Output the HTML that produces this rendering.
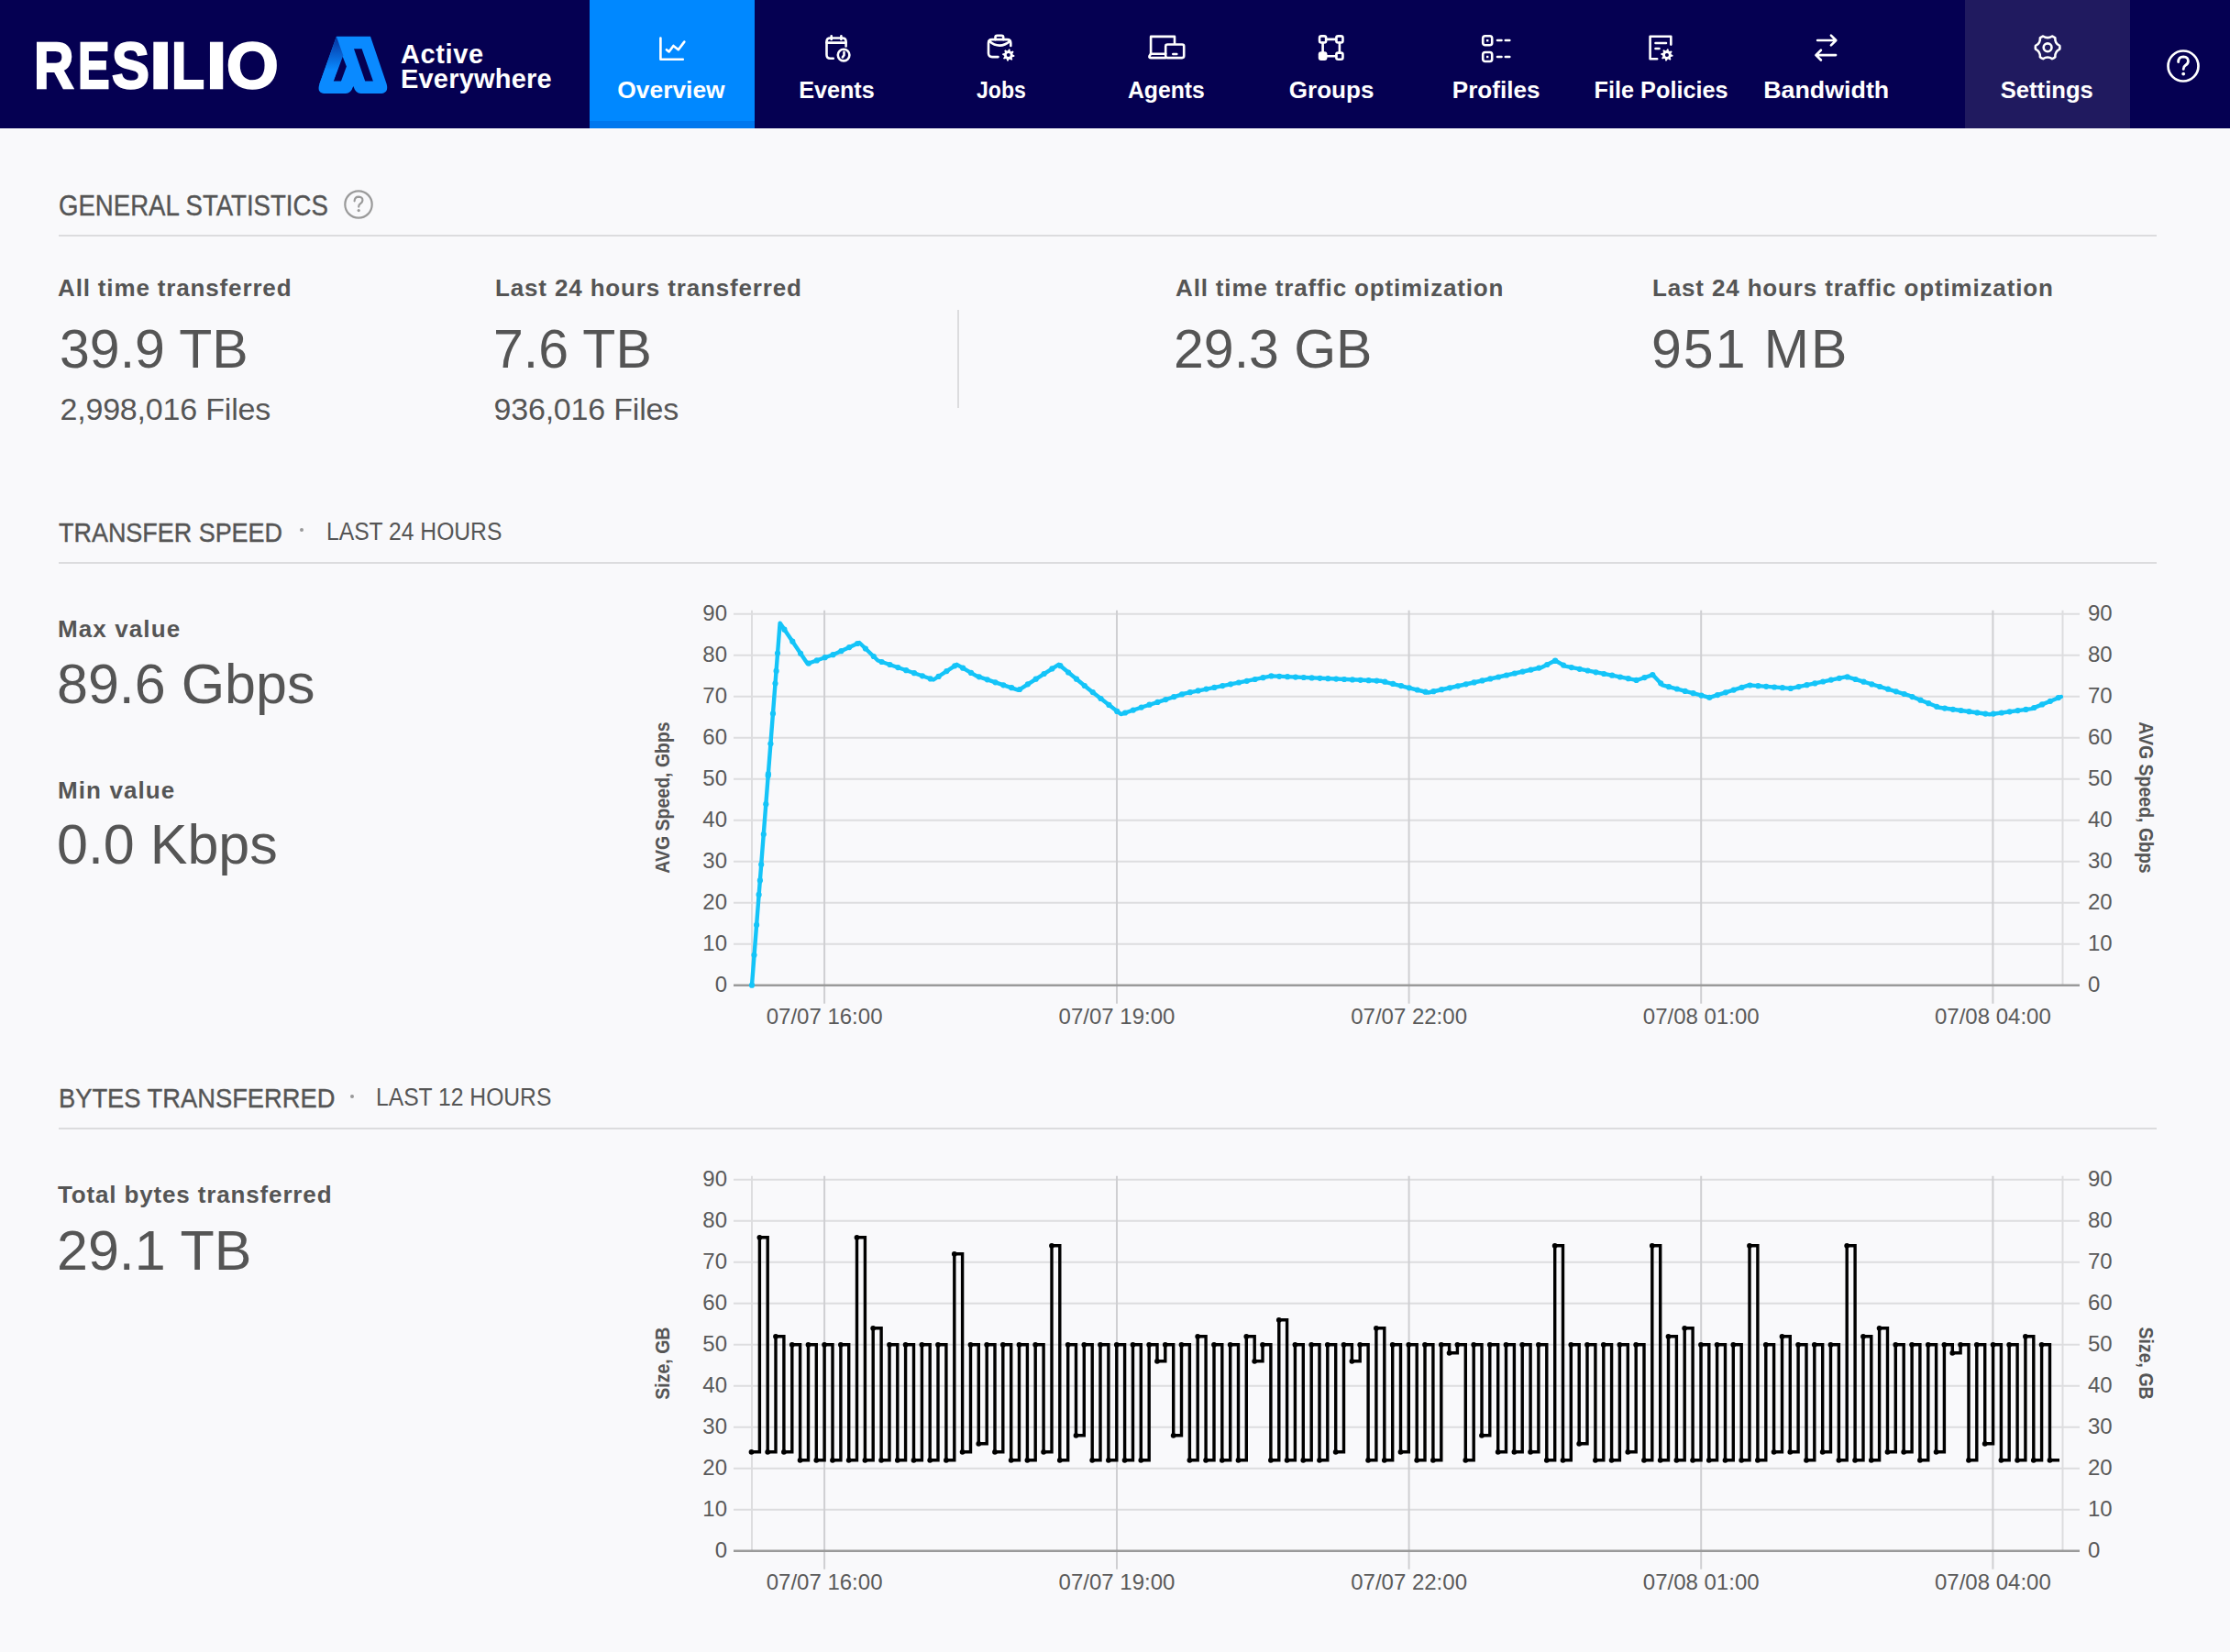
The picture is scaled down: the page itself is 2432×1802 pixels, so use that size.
<!DOCTYPE html><html><head><meta charset="utf-8"><title>Resilio Overview</title><style>

html,body{margin:0;padding:0;}
body{width:2432px;height:1802px;overflow:hidden;position:relative;background:#f9f9fb;font-family:"Liberation Sans",sans-serif;}
.t{position:absolute;white-space:nowrap;line-height:1;}
.res{top:37px;font-size:70px;font-weight:bold;color:#fff;-webkit-text-stroke:2.4px #fff;}
.navl{position:absolute;top:84.5px;font-size:26.5px;line-height:1;color:#fff;text-align:center;white-space:nowrap;font-weight:bold;}
svg text{font-family:"Liberation Sans",sans-serif;}
.ax{font-size:24px;fill:#5a5a5a;}
.at{font-size:22px;font-weight:bold;fill:#555;}

</style></head><body>
<div id="hdr" style="position:absolute;left:0;top:0;width:2432px;height:140px;background:#050052">
<div class="t res" style="left:37.4px;transform:scaleX(0.86);transform-origin:0 0">R</div>
<div class="t res" style="left:85.1px;transform:scaleX(0.74);transform-origin:0 0">E</div>
<div class="t res" style="left:121.9px;transform:scaleX(0.875);transform-origin:0 0">S</div>
<div class="t res" style="left:163.4px;transform:scaleX(1.25);transform-origin:0 0">I</div>
<div class="t res" style="left:186.9px;transform:scaleX(0.84);transform-origin:0 0">L</div>
<div class="t res" style="left:224.5px;transform:scaleX(1.14);transform-origin:0 0">I</div>
<div class="t res" style="left:246.5px;transform:scaleX(1.04);transform-origin:0 0">O</div>
<svg style="position:absolute;left:340px;top:30px" width="90" height="80" viewBox="340 30 90 80"><defs><linearGradient id="lg" x1="0" y1="0" x2="0" y2="1"><stop offset="0" stop-color="#06309a"/><stop offset="0.7" stop-color="#0a8aff"/></linearGradient></defs><path fill-rule="evenodd" fill="#0a8aff" d="M366.9,39.8 H404 L421.6,91.5 Q424.5,102.1 414,102.1 H393.5 Q388,102.1 385.3,94 Q382.6,102.1 377,102.1 H355.5 Q345,102.1 348.3,92 Z M386,53.2 H394.6 L406.9,88.5 H398.2 Z M373.2,60.6 L377.9,72.4 L372,88.5 H363.7 Z"/><path fill="url(#lg)" d="M366.9,39.8 L374.3,60.6 L363.7,88.5 L348.3,92 Z"/></svg>
<div id="act" class="t" style="left:437px;top:44.5px;font-size:29px;font-weight:bold;color:#fff;letter-spacing:0.6px">Active</div>
<div id="every" class="t" style="left:437px;top:71.5px;font-size:29px;font-weight:bold;color:#fff;letter-spacing:0.2px">Everywhere</div>
<div style="position:absolute;left:643px;top:0;width:180px;height:140px;background:#0088ff">
<div style="position:absolute;left:0;top:132px;width:180px;height:8px;background:#0077ee"></div>
<svg style="position:absolute;left:70px;top:32px;overflow:visible" width="40" height="40" viewBox="0 0 40 40"><path fill="none" stroke="#fff" stroke-width="2.6" stroke-linecap="round" stroke-linejoin="round" stroke-linecap="square" stroke-linejoin="miter" d="M7.4,9.5 V32.7 H31.8"/><path fill="none" stroke="#fff" stroke-width="2.6" stroke-linecap="round" stroke-linejoin="round" d="M13.9,22.2 L16.6,24.4 L21.4,17.9 L26.8,22.2 L33.3,13.6"/></svg>
<div class="navl" style="left:-1px;width:180px;"><span style="display:inline-block;transform:scaleX(0.995)">Overview</span></div>
</div>
<div style="position:absolute;left:823px;top:0;width:180px;height:140px;background:transparent">
<svg style="position:absolute;left:70px;top:32px;overflow:visible" width="40" height="40" viewBox="0 0 40 40"><path fill="none" stroke="#fff" stroke-width="2.6" stroke-linecap="round" stroke-linejoin="round" d="M15.8,31.7 H12.5 Q8.5,31.7 8.5,27.7 V13.5 Q8.5,9.5 12.5,9.5 H25.6 Q29.6,9.5 29.6,13.5 V18.5"/><path fill="none" stroke="#fff" stroke-width="2.6" stroke-linecap="round" stroke-linejoin="round" d="M8.5,14.6 H29.6"/><path fill="none" stroke="#fff" stroke-width="2.6" stroke-linecap="round" stroke-linejoin="round" d="M13.7,7.3 V11 M24.4,7.3 V11"/><circle cx="27.1" cy="28.1" r="6.3" fill="none" stroke="#fff" stroke-width="2.6" stroke-linecap="round" stroke-linejoin="round"/><path fill="none" stroke="#fff" stroke-width="2.6" stroke-linecap="round" stroke-linejoin="round" stroke-width="2.1" d="M27.5,24.8 V28.3 L25.9,30.4"/></svg>
<div class="navl" style="left:-1px;width:180px;"><span style="display:inline-block;transform:scaleX(0.951)">Events</span></div>
</div>
<div style="position:absolute;left:1003px;top:0;width:180px;height:140px;background:transparent">
<svg style="position:absolute;left:70px;top:32px;overflow:visible" width="40" height="40" viewBox="0 0 40 40"><path fill="none" stroke="#fff" stroke-width="2.6" stroke-linecap="round" stroke-linejoin="round" d="M15.5,30.1 H9 Q5,30.1 5,26.1 V15.1 Q5,11.1 9,11.1 H25.3 Q29.3,11.1 29.3,15.1 V18"/><path fill="none" stroke="#fff" stroke-width="2.6" stroke-linecap="round" stroke-linejoin="round" d="M12.5,11.1 V8.8 Q12.5,6.8 14.5,6.8 H19.2 Q21.2,6.8 21.2,8.8 V11.1"/><path fill="none" stroke="#fff" stroke-width="2.6" stroke-linecap="round" stroke-linejoin="round" d="M5.6,12.8 Q17.2,22.5 28.7,12.8"/><path fill="#fff" d="M33.49,28.43 L33.30,29.73 L31.16,30.16 L30.67,30.97 L31.30,33.06 L30.24,33.85 L28.43,32.64 L27.51,32.87 L26.47,34.79 L25.17,34.60 L24.74,32.46 L23.93,31.97 L21.84,32.60 L21.05,31.54 L22.26,29.73 L22.03,28.81 L20.11,27.77 L20.30,26.47 L22.44,26.04 L22.93,25.23 L22.30,23.14 L23.36,22.35 L25.17,23.56 L26.09,23.33 L27.13,21.41 L28.43,21.60 L28.86,23.74 L29.67,24.23 L31.76,23.60 L32.55,24.66 L31.34,26.47 L31.57,27.39 Z"/><circle cx="26.8" cy="28.1" r="2.01" fill="#050052"/></svg>
<div class="navl" style="left:-1px;width:180px;"><span style="display:inline-block;transform:scaleX(0.872)">Jobs</span></div>
</div>
<div style="position:absolute;left:1183px;top:0;width:180px;height:140px;background:transparent">
<svg style="position:absolute;left:70px;top:32px;overflow:visible" width="40" height="40" viewBox="0 0 40 40"><path fill="none" stroke="#fff" stroke-width="2.6" stroke-linecap="round" stroke-linejoin="round" stroke-linejoin="miter" stroke-linecap="square" d="M2.1,26.7 V7.9 H28 V15.5"/><path fill="none" stroke="#fff" stroke-width="2.6" stroke-linecap="round" stroke-linejoin="round" d="M18.2,31.1 H2.6 Q-0.6,31.1 0.9,28.5 L2.1,26.7 H18.2"/><rect x="18.2" y="16.5" width="20" height="14.6" rx="2" fill="none" stroke="#fff" stroke-width="2.6" stroke-linecap="round" stroke-linejoin="round"/><path fill="none" stroke="#fff" stroke-width="2.6" stroke-linecap="round" stroke-linejoin="round" stroke-width="2.4" d="M26.3,27 H30.3"/></svg>
<div class="navl" style="left:-1px;width:180px;"><span style="display:inline-block;transform:scaleX(0.935)">Agents</span></div>
</div>
<div style="position:absolute;left:1363px;top:0;width:180px;height:140px;background:transparent">
<svg style="position:absolute;left:70px;top:32px;overflow:visible" width="40" height="40" viewBox="0 0 40 40"><path fill="none" stroke="#fff" stroke-width="2.6" stroke-linecap="round" stroke-linejoin="round" d="M13.2,10.9 H24.3 M13.2,29.2 H24.3 M9.6,14.5 V25.6 M27.9,14.5 V25.6"/><rect x="6.05" y="7.35" width="7.1" height="7.1" rx="2" fill="none" stroke="#fff" stroke-width="2.6" stroke-linecap="round" stroke-linejoin="round"/><rect x="24.35" y="7.35" width="7.1" height="7.1" rx="2" fill="none" stroke="#fff" stroke-width="2.6" stroke-linecap="round" stroke-linejoin="round"/><rect x="24.35" y="25.65" width="7.1" height="7.1" rx="2" fill="none" stroke="#fff" stroke-width="2.6" stroke-linecap="round" stroke-linejoin="round"/><rect x="4.75" y="24.35" width="9.7" height="9.7" rx="3" fill="#fff"/></svg>
<div class="navl" style="left:-1px;width:180px;"><span style="display:inline-block;transform:scaleX(0.982)">Groups</span></div>
</div>
<div style="position:absolute;left:1543px;top:0;width:180px;height:140px;background:transparent">
<svg style="position:absolute;left:70px;top:32px;overflow:visible" width="40" height="40" viewBox="0 0 40 40"><rect x="4.2" y="7.2" width="10" height="10" rx="2.5" fill="none" stroke="#fff" stroke-width="2.6" stroke-linecap="round" stroke-linejoin="round"/><rect x="4.2" y="25" width="10" height="10" rx="2.5" fill="none" stroke="#fff" stroke-width="2.6" stroke-linecap="round" stroke-linejoin="round"/><rect x="8" y="11" width="2.4" height="2.4" fill="#fff"/><rect x="8" y="28.8" width="2.4" height="2.4" fill="#fff"/><path fill="none" stroke="#fff" stroke-width="2.6" stroke-linecap="round" stroke-linejoin="round" stroke-width="3" d="M20,12 H24.5 M28.8,12 H33.3 M20,30 H24.5 M28.8,30 H33.3"/></svg>
<div class="navl" style="left:-1px;width:180px;"><span style="display:inline-block;transform:scaleX(0.985)">Profiles</span></div>
</div>
<div style="position:absolute;left:1723px;top:0;width:180px;height:140px;background:transparent">
<svg style="position:absolute;left:70px;top:32px;overflow:visible" width="40" height="40" viewBox="0 0 40 40"><path fill="none" stroke="#fff" stroke-width="2.6" stroke-linecap="round" stroke-linejoin="round" stroke-linecap="square" stroke-linejoin="miter" d="M14.2,32.2 H6.6 V7.7 H29.3 V16.6"/><path fill="none" stroke="#fff" stroke-width="2.6" stroke-linecap="round" stroke-linejoin="round" d="M12.5,15 H24 M12.5,21 H16.5"/><path fill="#fff" d="M31.59,28.23 L31.40,29.53 L29.26,29.96 L28.77,30.77 L29.40,32.86 L28.34,33.65 L26.53,32.44 L25.61,32.67 L24.57,34.59 L23.27,34.40 L22.84,32.26 L22.03,31.77 L19.94,32.40 L19.15,31.34 L20.36,29.53 L20.13,28.61 L18.21,27.57 L18.40,26.27 L20.54,25.84 L21.03,25.03 L20.40,22.94 L21.46,22.15 L23.27,23.36 L24.19,23.13 L25.23,21.21 L26.53,21.40 L26.96,23.54 L27.77,24.03 L29.86,23.40 L30.65,24.46 L29.44,26.27 L29.67,27.19 Z"/><circle cx="24.9" cy="27.9" r="2.01" fill="#050052"/></svg>
<div class="navl" style="left:-1px;width:180px;"><span style="display:inline-block;transform:scaleX(0.953)">File Policies</span></div>
</div>
<div style="position:absolute;left:1903px;top:0;width:180px;height:140px;background:transparent">
<svg style="position:absolute;left:70px;top:32px;overflow:visible" width="40" height="40" viewBox="0 0 40 40"><path fill="none" stroke="#fff" stroke-width="2.6" stroke-linecap="round" stroke-linejoin="round" d="M9.1,12 H29 M23.9,6.6 L29.3,12 L23.9,17.4"/><path fill="none" stroke="#fff" stroke-width="2.6" stroke-linecap="round" stroke-linejoin="round" d="M29.1,28.1 H7.6 M12.9,22.7 L7.4,28.1 L12.9,33.5"/></svg>
<div class="navl" style="left:-1px;width:180px;"><span style="display:inline-block;transform:scaleX(1.012)">Bandwidth</span></div>
</div>
<div style="position:absolute;left:2143px;top:0;width:180px;height:140px;background:#201a5f">
<svg style="position:absolute;left:70px;top:32px;overflow:visible" width="40" height="40" viewBox="0 0 40 40"><path fill="none" stroke="#fff" stroke-width="2.6" stroke-linecap="round" stroke-linejoin="round" stroke-width="2.5" d="M33.27,17.95 A13.3,13.3 0 0 1 33.27,21.65 Q27.89,24.30 28.29,30.28 A13.3,13.3 0 0 1 25.08,32.13 Q20.10,28.80 15.12,32.13 A13.3,13.3 0 0 1 11.91,30.28 Q12.31,24.30 6.93,21.65 A13.3,13.3 0 0 1 6.93,17.95 Q12.31,15.30 11.91,9.32 A13.3,13.3 0 0 1 15.12,7.47 Q20.10,10.80 25.08,7.47 A13.3,13.3 0 0 1 28.29,9.32 Q27.89,15.30 33.27,17.95 Z"/><circle cx="20.1" cy="19.8" r="4.4" fill="none" stroke="#fff" stroke-width="2.6" stroke-linecap="round" stroke-linejoin="round" stroke-width="2.5"/></svg>
<div class="navl" style="left:-1px;width:180px;"><span style="display:inline-block;transform:scaleX(0.966)">Settings</span></div>
</div>
<svg style="position:absolute;left:2356px;top:47px" width="50" height="50" viewBox="0 0 50 50"><circle cx="25" cy="25" r="16.5" fill="none" stroke="#fff" stroke-width="2.7"/><path d="M19.6,20.6 Q19.8,14.8 25.2,14.8 Q30.6,15 30.4,19.8 Q30.2,22.6 27.4,24.2 Q25.2,25.6 25.2,28.4" fill="none" stroke="#fff" stroke-width="2.8" stroke-linecap="round"/><circle cx="25.2" cy="33.6" r="1.9" fill="#fff"/></svg>
</div>
<div id="gs" class="t" style="left:64px;top:209px;font-size:31px;font-weight:normal;color:#555555;transform:scaleX(0.89);transform-origin:0 0;-webkit-text-stroke:0.4px #555">GENERAL STATISTICS</div>
<svg style="position:absolute;left:371px;top:203px" width="40" height="40" viewBox="0 0 40 40"><circle cx="20" cy="20" r="14.7" fill="none" stroke="#9a9a9a" stroke-width="2.2"/><path d="M15.6,16.3 Q15.8,11.6 20.2,11.6 Q24.6,11.8 24.4,15.6 Q24.2,17.9 22,19.2 Q20.2,20.4 20.2,22.6" fill="none" stroke="#9a9a9a" stroke-width="2.2" stroke-linecap="round"/><circle cx="20.2" cy="26.6" r="1.6" fill="#9a9a9a"/></svg>
<div style="position:absolute;left:64px;top:256px;width:2288px;height:2px;background:#dcdcde"></div>
<div id="sl0" class="t" style="left:63px;top:300.5px;font-size:26px;font-weight:bold;color:#555555;letter-spacing:0.85px">All time transferred</div>
<div id="sb0" class="t" style="left:65px;top:352px;font-size:59px;font-weight:normal;color:#555555;letter-spacing:0px">39.9 TB</div>
<div id="sf0" class="t" style="left:65.5px;top:429px;font-size:34px;font-weight:normal;color:#555555;letter-spacing:-0.2px">2,998,016 Files</div>
<div id="sl1" class="t" style="left:540px;top:300.5px;font-size:26px;font-weight:bold;color:#555555;letter-spacing:0.85px">Last 24 hours transferred</div>
<div id="sb1" class="t" style="left:538px;top:352px;font-size:59px;font-weight:normal;color:#555555;letter-spacing:0px">7.6 TB</div>
<div id="sf1" class="t" style="left:538.5px;top:429px;font-size:34px;font-weight:normal;color:#555555;letter-spacing:-0.2px">936,016 Files</div>
<div id="sl2" class="t" style="left:1282px;top:300.5px;font-size:26px;font-weight:bold;color:#555555;letter-spacing:0.85px">All time traffic optimization</div>
<div id="sb2" class="t" style="left:1280px;top:352px;font-size:59px;font-weight:normal;color:#555555;letter-spacing:0px">29.3 GB</div>
<div id="sl3" class="t" style="left:1802px;top:300.5px;font-size:26px;font-weight:bold;color:#555555;letter-spacing:0.85px">Last 24 hours traffic optimization</div>
<div id="sb3" class="t" style="left:1801px;top:352px;font-size:59px;font-weight:normal;color:#555555;letter-spacing:2px">951 MB</div>
<div style="position:absolute;left:1044px;top:338px;width:2px;height:107px;background:#dcdcde"></div>
<div id="ts" class="t" style="left:64px;top:566px;font-size:30px;font-weight:normal;color:#555555;transform:scaleX(0.898);transform-origin:0 0;-webkit-text-stroke:0.4px #555">TRANSFER SPEED</div>
<div style="position:absolute;left:327px;top:576px;width:4px;height:4px;border-radius:2px;background:#999"></div>
<div id="ts2" class="t" style="left:355.5px;top:567px;font-size:27px;font-weight:normal;color:#555555;transform:scaleX(0.913);transform-origin:0 0">LAST 24 HOURS</div>
<div style="position:absolute;left:64px;top:613px;width:2288px;height:2px;background:#dcdcde"></div>
<div id="mx" class="t" style="left:63px;top:673px;font-size:26px;font-weight:bold;color:#555555;letter-spacing:1.1px">Max value</div>
<div id="mxv" class="t" style="left:62px;top:716px;font-size:61px;font-weight:normal;color:#555555;">89.6 Gbps</div>
<div id="mn" class="t" style="left:63px;top:849px;font-size:26px;font-weight:bold;color:#555555;letter-spacing:1.1px">Min value</div>
<div id="mnv" class="t" style="left:62px;top:891px;font-size:61px;font-weight:normal;color:#555555;">0.0 Kbps</div>
<div id="bt" class="t" style="left:64px;top:1183px;font-size:30px;font-weight:normal;color:#555555;transform:scaleX(0.91);transform-origin:0 0;-webkit-text-stroke:0.4px #555">BYTES TRANSFERRED</div>
<div style="position:absolute;left:382px;top:1194px;width:4px;height:4px;border-radius:2px;background:#999"></div>
<div id="bt2" class="t" style="left:410px;top:1184px;font-size:27px;font-weight:normal;color:#555555;transform:scaleX(0.913);transform-origin:0 0">LAST 12 HOURS</div>
<div style="position:absolute;left:64px;top:1230px;width:2288px;height:2px;background:#dcdcde"></div>
<div id="tb" class="t" style="left:63px;top:1290px;font-size:26px;font-weight:bold;color:#555555;letter-spacing:0.85px">Total bytes transferred</div>
<div id="tbv" class="t" style="left:62px;top:1334px;font-size:61px;font-weight:normal;color:#555555;">29.1 TB</div>
<svg style="position:absolute;left:0;top:0" width="2432" height="1802" viewBox="0 0 2432 1802">
<line x1="800" y1="1029.7" x2="2268" y2="1029.7" stroke="#dddddf" stroke-width="2"/>
<line x1="800" y1="984.7" x2="2268" y2="984.7" stroke="#dddddf" stroke-width="2"/>
<line x1="800" y1="939.7" x2="2268" y2="939.7" stroke="#dddddf" stroke-width="2"/>
<line x1="800" y1="894.7" x2="2268" y2="894.7" stroke="#dddddf" stroke-width="2"/>
<line x1="800" y1="849.7" x2="2268" y2="849.7" stroke="#dddddf" stroke-width="2"/>
<line x1="800" y1="804.7" x2="2268" y2="804.7" stroke="#dddddf" stroke-width="2"/>
<line x1="800" y1="759.7" x2="2268" y2="759.7" stroke="#dddddf" stroke-width="2"/>
<line x1="800" y1="714.7" x2="2268" y2="714.7" stroke="#dddddf" stroke-width="2"/>
<line x1="800" y1="669.7" x2="2268" y2="669.7" stroke="#dddddf" stroke-width="2"/>
<line x1="820.0" y1="665.7" x2="820.0" y2="1074.7" stroke="#dddddf" stroke-width="2"/>
<line x1="2249.5" y1="665.7" x2="2249.5" y2="1074.7" stroke="#dddddf" stroke-width="2"/>
<line x1="899.1" y1="665.7" x2="899.1" y2="1094.7" stroke="#cfcfd2" stroke-width="2"/>
<line x1="1218.0" y1="665.7" x2="1218.0" y2="1094.7" stroke="#cfcfd2" stroke-width="2"/>
<line x1="1536.6" y1="665.7" x2="1536.6" y2="1094.7" stroke="#cfcfd2" stroke-width="2"/>
<line x1="1855.2" y1="665.7" x2="1855.2" y2="1094.7" stroke="#cfcfd2" stroke-width="2"/>
<line x1="2173.4" y1="665.7" x2="2173.4" y2="1094.7" stroke="#cfcfd2" stroke-width="2"/>
<line x1="800" y1="1074.7" x2="2268" y2="1074.7" stroke="#9a9a9a" stroke-width="2.5"/>
<text x="793" y="1082.2" text-anchor="end" class="ax">0</text>
<text x="2277" y="1082.2" class="ax">0</text>
<text x="793" y="1037.2" text-anchor="end" class="ax">10</text>
<text x="2277" y="1037.2" class="ax">10</text>
<text x="793" y="992.2" text-anchor="end" class="ax">20</text>
<text x="2277" y="992.2" class="ax">20</text>
<text x="793" y="947.2" text-anchor="end" class="ax">30</text>
<text x="2277" y="947.2" class="ax">30</text>
<text x="793" y="902.2" text-anchor="end" class="ax">40</text>
<text x="2277" y="902.2" class="ax">40</text>
<text x="793" y="857.2" text-anchor="end" class="ax">50</text>
<text x="2277" y="857.2" class="ax">50</text>
<text x="793" y="812.2" text-anchor="end" class="ax">60</text>
<text x="2277" y="812.2" class="ax">60</text>
<text x="793" y="767.2" text-anchor="end" class="ax">70</text>
<text x="2277" y="767.2" class="ax">70</text>
<text x="793" y="722.2" text-anchor="end" class="ax">80</text>
<text x="2277" y="722.2" class="ax">80</text>
<text x="793" y="677.2" text-anchor="end" class="ax">90</text>
<text x="2277" y="677.2" class="ax">90</text>
<text x="899.1" y="1117.2" text-anchor="middle" class="ax">07/07 16:00</text>
<text x="1218.0" y="1117.2" text-anchor="middle" class="ax">07/07 19:00</text>
<text x="1536.6" y="1117.2" text-anchor="middle" class="ax">07/07 22:00</text>
<text x="1855.2" y="1117.2" text-anchor="middle" class="ax">07/08 01:00</text>
<text x="2173.4" y="1117.2" text-anchor="middle" class="ax">07/08 04:00</text>
<text transform="translate(729.5 870.0) rotate(-90) scale(0.887 1)" text-anchor="middle" class="at">AVG Speed, Gbps</text>
<text transform="translate(2333 870.0) rotate(90) scale(0.887 1)" text-anchor="middle" class="at">AVG Speed, Gbps</text>
<polyline points="820,1074.7 850.6,679.6 880.7,724 899.5,717.3 909,714 937.2,701 957.4,720.5 1018,741.5 1043.5,724.8 1065,737.4 1110.8,752.8 1154.6,724.8 1187.4,751.7 1222.4,779.1 1246.6,771 1292.4,756.3 1386.5,737.4 1506.5,742.8 1557.6,755.5 1681.3,728 1696.1,720.5 1706.9,726.7 1785,742 1802.4,736.1 1813.2,747.4 1864.3,760.9 1907.3,747.4 1953.1,750.9 2013.8,738.1 2081,758.3 2114.7,771.8 2169.9,779.2 2215.6,773.1 2247.9,760" fill="none" stroke="#14c4f8" stroke-width="4.4" stroke-linejoin="round" stroke-linecap="round"/>
<circle cx="820.0" cy="1074.7" r="3.1" fill="#14c4f8"/>
<circle cx="828.9" cy="960.4" r="3.1" fill="#14c4f8"/>
<circle cx="837.7" cy="846.2" r="3.1" fill="#14c4f8"/>
<circle cx="846.6" cy="731.9" r="3.1" fill="#14c4f8"/>
<circle cx="855.4" cy="686.7" r="3.1" fill="#14c4f8"/>
<circle cx="864.3" cy="699.7" r="3.1" fill="#14c4f8"/>
<circle cx="873.1" cy="712.8" r="3.1" fill="#14c4f8"/>
<circle cx="882.0" cy="723.6" r="3.1" fill="#14c4f8"/>
<circle cx="890.8" cy="720.4" r="3.1" fill="#14c4f8"/>
<circle cx="899.7" cy="717.2" r="3.1" fill="#14c4f8"/>
<circle cx="908.5" cy="714.2" r="3.1" fill="#14c4f8"/>
<circle cx="917.4" cy="710.2" r="3.1" fill="#14c4f8"/>
<circle cx="926.2" cy="706.1" r="3.1" fill="#14c4f8"/>
<circle cx="935.1" cy="702.0" r="3.1" fill="#14c4f8"/>
<circle cx="943.9" cy="707.5" r="3.1" fill="#14c4f8"/>
<circle cx="952.8" cy="716.0" r="3.1" fill="#14c4f8"/>
<circle cx="961.6" cy="722.0" r="3.1" fill="#14c4f8"/>
<circle cx="970.5" cy="725.0" r="3.1" fill="#14c4f8"/>
<circle cx="979.3" cy="728.1" r="3.1" fill="#14c4f8"/>
<circle cx="988.2" cy="731.2" r="3.1" fill="#14c4f8"/>
<circle cx="997.0" cy="734.2" r="3.1" fill="#14c4f8"/>
<circle cx="1005.9" cy="737.3" r="3.1" fill="#14c4f8"/>
<circle cx="1014.7" cy="740.4" r="3.1" fill="#14c4f8"/>
<circle cx="1023.6" cy="737.9" r="3.1" fill="#14c4f8"/>
<circle cx="1032.4" cy="732.1" r="3.1" fill="#14c4f8"/>
<circle cx="1041.3" cy="726.3" r="3.1" fill="#14c4f8"/>
<circle cx="1050.1" cy="728.7" r="3.1" fill="#14c4f8"/>
<circle cx="1059.0" cy="733.9" r="3.1" fill="#14c4f8"/>
<circle cx="1067.8" cy="738.3" r="3.1" fill="#14c4f8"/>
<circle cx="1076.7" cy="741.3" r="3.1" fill="#14c4f8"/>
<circle cx="1085.5" cy="744.3" r="3.1" fill="#14c4f8"/>
<circle cx="1094.3" cy="747.3" r="3.1" fill="#14c4f8"/>
<circle cx="1103.2" cy="750.2" r="3.1" fill="#14c4f8"/>
<circle cx="1112.0" cy="752.0" r="3.1" fill="#14c4f8"/>
<circle cx="1120.9" cy="746.3" r="3.1" fill="#14c4f8"/>
<circle cx="1129.7" cy="740.7" r="3.1" fill="#14c4f8"/>
<circle cx="1138.6" cy="735.0" r="3.1" fill="#14c4f8"/>
<circle cx="1147.4" cy="729.4" r="3.1" fill="#14c4f8"/>
<circle cx="1156.3" cy="726.2" r="3.1" fill="#14c4f8"/>
<circle cx="1165.1" cy="733.5" r="3.1" fill="#14c4f8"/>
<circle cx="1174.0" cy="740.7" r="3.1" fill="#14c4f8"/>
<circle cx="1182.8" cy="748.0" r="3.1" fill="#14c4f8"/>
<circle cx="1191.7" cy="755.1" r="3.1" fill="#14c4f8"/>
<circle cx="1200.5" cy="762.0" r="3.1" fill="#14c4f8"/>
<circle cx="1209.4" cy="768.9" r="3.1" fill="#14c4f8"/>
<circle cx="1218.2" cy="775.9" r="3.1" fill="#14c4f8"/>
<circle cx="1227.1" cy="777.5" r="3.1" fill="#14c4f8"/>
<circle cx="1235.9" cy="774.6" r="3.1" fill="#14c4f8"/>
<circle cx="1244.8" cy="771.6" r="3.1" fill="#14c4f8"/>
<circle cx="1253.6" cy="768.7" r="3.1" fill="#14c4f8"/>
<circle cx="1262.5" cy="765.9" r="3.1" fill="#14c4f8"/>
<circle cx="1271.3" cy="763.1" r="3.1" fill="#14c4f8"/>
<circle cx="1280.2" cy="760.2" r="3.1" fill="#14c4f8"/>
<circle cx="1289.0" cy="757.4" r="3.1" fill="#14c4f8"/>
<circle cx="1297.9" cy="755.2" r="3.1" fill="#14c4f8"/>
<circle cx="1306.7" cy="753.4" r="3.1" fill="#14c4f8"/>
<circle cx="1315.6" cy="751.6" r="3.1" fill="#14c4f8"/>
<circle cx="1324.4" cy="749.9" r="3.1" fill="#14c4f8"/>
<circle cx="1333.3" cy="748.1" r="3.1" fill="#14c4f8"/>
<circle cx="1342.1" cy="746.3" r="3.1" fill="#14c4f8"/>
<circle cx="1351.0" cy="744.5" r="3.1" fill="#14c4f8"/>
<circle cx="1359.8" cy="742.8" r="3.1" fill="#14c4f8"/>
<circle cx="1368.7" cy="741.0" r="3.1" fill="#14c4f8"/>
<circle cx="1377.5" cy="739.2" r="3.1" fill="#14c4f8"/>
<circle cx="1386.4" cy="737.4" r="3.1" fill="#14c4f8"/>
<circle cx="1395.2" cy="737.8" r="3.1" fill="#14c4f8"/>
<circle cx="1404.1" cy="738.2" r="3.1" fill="#14c4f8"/>
<circle cx="1412.9" cy="738.6" r="3.1" fill="#14c4f8"/>
<circle cx="1421.8" cy="739.0" r="3.1" fill="#14c4f8"/>
<circle cx="1430.6" cy="739.4" r="3.1" fill="#14c4f8"/>
<circle cx="1439.5" cy="739.8" r="3.1" fill="#14c4f8"/>
<circle cx="1448.3" cy="740.2" r="3.1" fill="#14c4f8"/>
<circle cx="1457.2" cy="740.6" r="3.1" fill="#14c4f8"/>
<circle cx="1466.0" cy="741.0" r="3.1" fill="#14c4f8"/>
<circle cx="1474.9" cy="741.4" r="3.1" fill="#14c4f8"/>
<circle cx="1483.7" cy="741.8" r="3.1" fill="#14c4f8"/>
<circle cx="1492.6" cy="742.2" r="3.1" fill="#14c4f8"/>
<circle cx="1501.4" cy="742.6" r="3.1" fill="#14c4f8"/>
<circle cx="1510.3" cy="743.7" r="3.1" fill="#14c4f8"/>
<circle cx="1519.1" cy="745.9" r="3.1" fill="#14c4f8"/>
<circle cx="1528.0" cy="748.1" r="3.1" fill="#14c4f8"/>
<circle cx="1536.8" cy="750.3" r="3.1" fill="#14c4f8"/>
<circle cx="1545.7" cy="752.5" r="3.1" fill="#14c4f8"/>
<circle cx="1554.5" cy="754.7" r="3.1" fill="#14c4f8"/>
<circle cx="1563.4" cy="754.2" r="3.1" fill="#14c4f8"/>
<circle cx="1572.2" cy="752.2" r="3.1" fill="#14c4f8"/>
<circle cx="1581.1" cy="750.3" r="3.1" fill="#14c4f8"/>
<circle cx="1589.9" cy="748.3" r="3.1" fill="#14c4f8"/>
<circle cx="1598.8" cy="746.3" r="3.1" fill="#14c4f8"/>
<circle cx="1607.6" cy="744.4" r="3.1" fill="#14c4f8"/>
<circle cx="1616.5" cy="742.4" r="3.1" fill="#14c4f8"/>
<circle cx="1625.3" cy="740.4" r="3.1" fill="#14c4f8"/>
<circle cx="1634.2" cy="738.5" r="3.1" fill="#14c4f8"/>
<circle cx="1643.0" cy="736.5" r="3.1" fill="#14c4f8"/>
<circle cx="1651.9" cy="734.5" r="3.1" fill="#14c4f8"/>
<circle cx="1660.7" cy="732.6" r="3.1" fill="#14c4f8"/>
<circle cx="1669.6" cy="730.6" r="3.1" fill="#14c4f8"/>
<circle cx="1678.4" cy="728.6" r="3.1" fill="#14c4f8"/>
<circle cx="1687.3" cy="725.0" r="3.1" fill="#14c4f8"/>
<circle cx="1696.1" cy="720.5" r="3.1" fill="#14c4f8"/>
<circle cx="1705.0" cy="725.6" r="3.1" fill="#14c4f8"/>
<circle cx="1713.8" cy="728.1" r="3.1" fill="#14c4f8"/>
<circle cx="1722.7" cy="729.8" r="3.1" fill="#14c4f8"/>
<circle cx="1731.5" cy="731.5" r="3.1" fill="#14c4f8"/>
<circle cx="1740.4" cy="733.3" r="3.1" fill="#14c4f8"/>
<circle cx="1749.2" cy="735.0" r="3.1" fill="#14c4f8"/>
<circle cx="1758.1" cy="736.7" r="3.1" fill="#14c4f8"/>
<circle cx="1766.9" cy="738.5" r="3.1" fill="#14c4f8"/>
<circle cx="1775.8" cy="740.2" r="3.1" fill="#14c4f8"/>
<circle cx="1784.6" cy="741.9" r="3.1" fill="#14c4f8"/>
<circle cx="1793.5" cy="739.1" r="3.1" fill="#14c4f8"/>
<circle cx="1802.3" cy="736.1" r="3.1" fill="#14c4f8"/>
<circle cx="1811.2" cy="745.3" r="3.1" fill="#14c4f8"/>
<circle cx="1820.0" cy="749.2" r="3.1" fill="#14c4f8"/>
<circle cx="1828.9" cy="751.5" r="3.1" fill="#14c4f8"/>
<circle cx="1837.7" cy="753.9" r="3.1" fill="#14c4f8"/>
<circle cx="1846.6" cy="756.2" r="3.1" fill="#14c4f8"/>
<circle cx="1855.4" cy="758.6" r="3.1" fill="#14c4f8"/>
<circle cx="1864.3" cy="760.9" r="3.1" fill="#14c4f8"/>
<circle cx="1873.1" cy="758.1" r="3.1" fill="#14c4f8"/>
<circle cx="1882.0" cy="755.3" r="3.1" fill="#14c4f8"/>
<circle cx="1890.8" cy="752.6" r="3.1" fill="#14c4f8"/>
<circle cx="1899.7" cy="749.8" r="3.1" fill="#14c4f8"/>
<circle cx="1908.5" cy="747.5" r="3.1" fill="#14c4f8"/>
<circle cx="1917.4" cy="748.2" r="3.1" fill="#14c4f8"/>
<circle cx="1926.2" cy="748.8" r="3.1" fill="#14c4f8"/>
<circle cx="1935.1" cy="749.5" r="3.1" fill="#14c4f8"/>
<circle cx="1943.9" cy="750.2" r="3.1" fill="#14c4f8"/>
<circle cx="1952.8" cy="750.9" r="3.1" fill="#14c4f8"/>
<circle cx="1961.6" cy="749.1" r="3.1" fill="#14c4f8"/>
<circle cx="1970.5" cy="747.2" r="3.1" fill="#14c4f8"/>
<circle cx="1979.3" cy="745.4" r="3.1" fill="#14c4f8"/>
<circle cx="1988.2" cy="743.5" r="3.1" fill="#14c4f8"/>
<circle cx="1997.0" cy="741.6" r="3.1" fill="#14c4f8"/>
<circle cx="2005.9" cy="739.8" r="3.1" fill="#14c4f8"/>
<circle cx="2014.7" cy="738.4" r="3.1" fill="#14c4f8"/>
<circle cx="2023.6" cy="741.0" r="3.1" fill="#14c4f8"/>
<circle cx="2032.4" cy="743.7" r="3.1" fill="#14c4f8"/>
<circle cx="2041.3" cy="746.4" r="3.1" fill="#14c4f8"/>
<circle cx="2050.1" cy="749.0" r="3.1" fill="#14c4f8"/>
<circle cx="2059.0" cy="751.7" r="3.1" fill="#14c4f8"/>
<circle cx="2067.8" cy="754.3" r="3.1" fill="#14c4f8"/>
<circle cx="2076.7" cy="757.0" r="3.1" fill="#14c4f8"/>
<circle cx="2085.5" cy="760.1" r="3.1" fill="#14c4f8"/>
<circle cx="2094.4" cy="763.7" r="3.1" fill="#14c4f8"/>
<circle cx="2103.2" cy="767.2" r="3.1" fill="#14c4f8"/>
<circle cx="2112.1" cy="770.8" r="3.1" fill="#14c4f8"/>
<circle cx="2120.9" cy="772.6" r="3.1" fill="#14c4f8"/>
<circle cx="2129.8" cy="773.8" r="3.1" fill="#14c4f8"/>
<circle cx="2138.6" cy="775.0" r="3.1" fill="#14c4f8"/>
<circle cx="2147.5" cy="776.2" r="3.1" fill="#14c4f8"/>
<circle cx="2156.3" cy="777.4" r="3.1" fill="#14c4f8"/>
<circle cx="2165.2" cy="778.6" r="3.1" fill="#14c4f8"/>
<circle cx="2174.0" cy="778.6" r="3.1" fill="#14c4f8"/>
<circle cx="2182.9" cy="777.5" r="3.1" fill="#14c4f8"/>
<circle cx="2191.7" cy="776.3" r="3.1" fill="#14c4f8"/>
<circle cx="2200.6" cy="775.1" r="3.1" fill="#14c4f8"/>
<circle cx="2209.4" cy="773.9" r="3.1" fill="#14c4f8"/>
<circle cx="2218.3" cy="772.0" r="3.1" fill="#14c4f8"/>
<circle cx="2227.1" cy="768.4" r="3.1" fill="#14c4f8"/>
<circle cx="2236.0" cy="764.8" r="3.1" fill="#14c4f8"/>
<circle cx="2244.8" cy="761.2" r="3.1" fill="#14c4f8"/>
<circle cx="822.5" cy="1041.8" r="3.1" fill="#14c4f8"/>
<circle cx="825.1" cy="1008.9" r="3.1" fill="#14c4f8"/>
<circle cx="827.6" cy="975.9" r="3.1" fill="#14c4f8"/>
<circle cx="830.2" cy="943.0" r="3.1" fill="#14c4f8"/>
<circle cx="832.8" cy="910.1" r="3.1" fill="#14c4f8"/>
<circle cx="835.3" cy="877.2" r="3.1" fill="#14c4f8"/>
<circle cx="837.9" cy="844.2" r="3.1" fill="#14c4f8"/>
<circle cx="840.4" cy="811.3" r="3.1" fill="#14c4f8"/>
<circle cx="843.0" cy="778.4" r="3.1" fill="#14c4f8"/>
<circle cx="845.5" cy="745.5" r="3.1" fill="#14c4f8"/>
<circle cx="848.0" cy="712.5" r="3.1" fill="#14c4f8"/>
<line x1="800" y1="1646.8" x2="2268" y2="1646.8" stroke="#dddddf" stroke-width="2"/>
<line x1="800" y1="1601.8" x2="2268" y2="1601.8" stroke="#dddddf" stroke-width="2"/>
<line x1="800" y1="1556.8" x2="2268" y2="1556.8" stroke="#dddddf" stroke-width="2"/>
<line x1="800" y1="1511.8" x2="2268" y2="1511.8" stroke="#dddddf" stroke-width="2"/>
<line x1="800" y1="1466.8" x2="2268" y2="1466.8" stroke="#dddddf" stroke-width="2"/>
<line x1="800" y1="1421.8" x2="2268" y2="1421.8" stroke="#dddddf" stroke-width="2"/>
<line x1="800" y1="1376.8" x2="2268" y2="1376.8" stroke="#dddddf" stroke-width="2"/>
<line x1="800" y1="1331.8" x2="2268" y2="1331.8" stroke="#dddddf" stroke-width="2"/>
<line x1="800" y1="1286.8" x2="2268" y2="1286.8" stroke="#dddddf" stroke-width="2"/>
<line x1="820.0" y1="1282.8" x2="820.0" y2="1691.8" stroke="#dddddf" stroke-width="2"/>
<line x1="2249.5" y1="1282.8" x2="2249.5" y2="1691.8" stroke="#dddddf" stroke-width="2"/>
<line x1="899.1" y1="1282.8" x2="899.1" y2="1711.8" stroke="#cfcfd2" stroke-width="2"/>
<line x1="1218.0" y1="1282.8" x2="1218.0" y2="1711.8" stroke="#cfcfd2" stroke-width="2"/>
<line x1="1536.6" y1="1282.8" x2="1536.6" y2="1711.8" stroke="#cfcfd2" stroke-width="2"/>
<line x1="1855.2" y1="1282.8" x2="1855.2" y2="1711.8" stroke="#cfcfd2" stroke-width="2"/>
<line x1="2173.4" y1="1282.8" x2="2173.4" y2="1711.8" stroke="#cfcfd2" stroke-width="2"/>
<line x1="800" y1="1691.8" x2="2268" y2="1691.8" stroke="#9a9a9a" stroke-width="2.5"/>
<text x="793" y="1699.3" text-anchor="end" class="ax">0</text>
<text x="2277" y="1699.3" class="ax">0</text>
<text x="793" y="1654.3" text-anchor="end" class="ax">10</text>
<text x="2277" y="1654.3" class="ax">10</text>
<text x="793" y="1609.3" text-anchor="end" class="ax">20</text>
<text x="2277" y="1609.3" class="ax">20</text>
<text x="793" y="1564.3" text-anchor="end" class="ax">30</text>
<text x="2277" y="1564.3" class="ax">30</text>
<text x="793" y="1519.3" text-anchor="end" class="ax">40</text>
<text x="2277" y="1519.3" class="ax">40</text>
<text x="793" y="1474.3" text-anchor="end" class="ax">50</text>
<text x="2277" y="1474.3" class="ax">50</text>
<text x="793" y="1429.3" text-anchor="end" class="ax">60</text>
<text x="2277" y="1429.3" class="ax">60</text>
<text x="793" y="1384.3" text-anchor="end" class="ax">70</text>
<text x="2277" y="1384.3" class="ax">70</text>
<text x="793" y="1339.3" text-anchor="end" class="ax">80</text>
<text x="2277" y="1339.3" class="ax">80</text>
<text x="793" y="1294.3" text-anchor="end" class="ax">90</text>
<text x="2277" y="1294.3" class="ax">90</text>
<text x="899.1" y="1734.3" text-anchor="middle" class="ax">07/07 16:00</text>
<text x="1218.0" y="1734.3" text-anchor="middle" class="ax">07/07 19:00</text>
<text x="1536.6" y="1734.3" text-anchor="middle" class="ax">07/07 22:00</text>
<text x="1855.2" y="1734.3" text-anchor="middle" class="ax">07/08 01:00</text>
<text x="2173.4" y="1734.3" text-anchor="middle" class="ax">07/08 04:00</text>
<text transform="translate(729.5 1487.1) rotate(-90) scale(0.887 1)" text-anchor="middle" class="at">Size, GB</text>
<text transform="translate(2333 1487.1) rotate(90) scale(0.887 1)" text-anchor="middle" class="at">Size, GB</text>
<path d="M819.5,1583.8 H828.4 V1349.8 H837.2 V1583.8 H846.0 V1457.8 H854.9 V1583.8 H863.8 V1466.8 H872.6 V1592.8 H881.5 V1466.8 H890.3 V1592.8 H899.1 V1466.8 H908.0 V1592.8 H916.9 V1466.8 H925.7 V1592.8 H934.5 V1349.8 H943.4 V1592.8 H952.2 V1448.8 H961.1 V1592.8 H970.0 V1466.8 H978.8 V1592.8 H987.6 V1466.8 H996.5 V1592.8 H1005.4 V1466.8 H1014.2 V1592.8 H1023.0 V1466.8 H1031.9 V1592.8 H1040.8 V1367.8 H1049.6 V1583.8 H1058.5 V1466.8 H1067.3 V1574.8 H1076.2 V1466.8 H1085.0 V1583.8 H1093.8 V1466.8 H1102.7 V1592.8 H1111.5 V1466.8 H1120.4 V1592.8 H1129.2 V1466.8 H1138.1 V1583.8 H1147.0 V1358.8 H1155.8 V1592.8 H1164.7 V1466.8 H1173.5 V1565.8 H1182.3 V1466.8 H1191.2 V1592.8 H1200.0 V1466.8 H1208.9 V1592.8 H1217.8 V1466.8 H1226.6 V1592.8 H1235.5 V1466.8 H1244.3 V1592.8 H1253.2 V1466.8 H1262.0 V1484.8 H1270.8 V1466.8 H1279.7 V1565.8 H1288.5 V1466.8 H1297.4 V1592.8 H1306.2 V1457.8 H1315.1 V1592.8 H1324.0 V1466.8 H1332.8 V1592.8 H1341.7 V1466.8 H1350.5 V1592.8 H1359.3 V1457.8 H1368.2 V1484.8 H1377.0 V1466.8 H1385.9 V1592.8 H1394.8 V1439.8 H1403.6 V1592.8 H1412.4 V1466.8 H1421.3 V1592.8 H1430.2 V1466.8 H1439.0 V1592.8 H1447.8 V1466.8 H1456.7 V1583.8 H1465.5 V1466.8 H1474.4 V1484.8 H1483.2 V1466.8 H1492.1 V1592.8 H1500.9 V1448.8 H1509.8 V1592.8 H1518.7 V1466.8 H1527.5 V1583.8 H1536.3 V1466.8 H1545.2 V1592.8 H1554.0 V1466.8 H1562.9 V1592.8 H1571.8 V1466.8 H1580.6 V1475.8 H1589.4 V1466.8 H1598.3 V1592.8 H1607.2 V1466.8 H1616.0 V1565.8 H1624.8 V1466.8 H1633.7 V1583.8 H1642.5 V1466.8 H1651.4 V1583.8 H1660.2 V1466.8 H1669.1 V1583.8 H1677.9 V1466.8 H1686.8 V1592.8 H1695.7 V1358.8 H1704.5 V1592.8 H1713.3 V1466.8 H1722.2 V1574.8 H1731.0 V1466.8 H1739.9 V1592.8 H1748.8 V1466.8 H1757.6 V1592.8 H1766.4 V1466.8 H1775.3 V1583.8 H1784.2 V1466.8 H1793.0 V1592.8 H1801.8 V1358.8 H1810.7 V1592.8 H1819.5 V1457.8 H1828.4 V1592.8 H1837.2 V1448.8 H1846.1 V1592.8 H1855.0 V1466.8 H1863.8 V1592.8 H1872.6 V1466.8 H1881.5 V1592.8 H1890.3 V1466.8 H1899.2 V1592.8 H1908.0 V1358.8 H1916.9 V1592.8 H1925.8 V1466.8 H1934.6 V1583.8 H1943.5 V1457.8 H1952.3 V1583.8 H1961.1 V1466.8 H1970.0 V1592.8 H1978.8 V1466.8 H1987.7 V1583.8 H1996.5 V1466.8 H2005.4 V1592.8 H2014.2 V1358.8 H2023.1 V1592.8 H2032.0 V1457.8 H2040.8 V1592.8 H2049.6 V1448.8 H2058.5 V1583.8 H2067.3 V1466.8 H2076.2 V1583.8 H2085.1 V1466.8 H2093.9 V1592.8 H2102.8 V1466.8 H2111.6 V1583.8 H2120.4 V1466.8 H2129.3 V1475.8 H2138.1 V1466.8 H2147.0 V1592.8 H2155.8 V1466.8 H2164.7 V1574.8 H2173.6 V1466.8 H2182.4 V1592.8 H2191.2 V1466.8 H2200.1 V1592.8 H2208.9 V1457.8 H2217.8 V1592.8 H2226.6 V1466.8 H2235.5 V1592.8 H2246" fill="none" stroke="#000" stroke-width="3.4" stroke-linejoin="miter"/>
<circle cx="819.5" cy="1583.8" r="2.9" fill="#000"/>
<circle cx="828.4" cy="1349.8" r="2.9" fill="#000"/>
<circle cx="837.2" cy="1583.8" r="2.9" fill="#000"/>
<circle cx="846.0" cy="1457.8" r="2.9" fill="#000"/>
<circle cx="854.9" cy="1583.8" r="2.9" fill="#000"/>
<circle cx="863.8" cy="1466.8" r="2.9" fill="#000"/>
<circle cx="872.6" cy="1592.8" r="2.9" fill="#000"/>
<circle cx="881.5" cy="1466.8" r="2.9" fill="#000"/>
<circle cx="890.3" cy="1592.8" r="2.9" fill="#000"/>
<circle cx="899.1" cy="1466.8" r="2.9" fill="#000"/>
<circle cx="908.0" cy="1592.8" r="2.9" fill="#000"/>
<circle cx="916.9" cy="1466.8" r="2.9" fill="#000"/>
<circle cx="925.7" cy="1592.8" r="2.9" fill="#000"/>
<circle cx="934.5" cy="1349.8" r="2.9" fill="#000"/>
<circle cx="943.4" cy="1592.8" r="2.9" fill="#000"/>
<circle cx="952.2" cy="1448.8" r="2.9" fill="#000"/>
<circle cx="961.1" cy="1592.8" r="2.9" fill="#000"/>
<circle cx="970.0" cy="1466.8" r="2.9" fill="#000"/>
<circle cx="978.8" cy="1592.8" r="2.9" fill="#000"/>
<circle cx="987.6" cy="1466.8" r="2.9" fill="#000"/>
<circle cx="996.5" cy="1592.8" r="2.9" fill="#000"/>
<circle cx="1005.4" cy="1466.8" r="2.9" fill="#000"/>
<circle cx="1014.2" cy="1592.8" r="2.9" fill="#000"/>
<circle cx="1023.0" cy="1466.8" r="2.9" fill="#000"/>
<circle cx="1031.9" cy="1592.8" r="2.9" fill="#000"/>
<circle cx="1040.8" cy="1367.8" r="2.9" fill="#000"/>
<circle cx="1049.6" cy="1583.8" r="2.9" fill="#000"/>
<circle cx="1058.5" cy="1466.8" r="2.9" fill="#000"/>
<circle cx="1067.3" cy="1574.8" r="2.9" fill="#000"/>
<circle cx="1076.2" cy="1466.8" r="2.9" fill="#000"/>
<circle cx="1085.0" cy="1583.8" r="2.9" fill="#000"/>
<circle cx="1093.8" cy="1466.8" r="2.9" fill="#000"/>
<circle cx="1102.7" cy="1592.8" r="2.9" fill="#000"/>
<circle cx="1111.5" cy="1466.8" r="2.9" fill="#000"/>
<circle cx="1120.4" cy="1592.8" r="2.9" fill="#000"/>
<circle cx="1129.2" cy="1466.8" r="2.9" fill="#000"/>
<circle cx="1138.1" cy="1583.8" r="2.9" fill="#000"/>
<circle cx="1147.0" cy="1358.8" r="2.9" fill="#000"/>
<circle cx="1155.8" cy="1592.8" r="2.9" fill="#000"/>
<circle cx="1164.7" cy="1466.8" r="2.9" fill="#000"/>
<circle cx="1173.5" cy="1565.8" r="2.9" fill="#000"/>
<circle cx="1182.3" cy="1466.8" r="2.9" fill="#000"/>
<circle cx="1191.2" cy="1592.8" r="2.9" fill="#000"/>
<circle cx="1200.0" cy="1466.8" r="2.9" fill="#000"/>
<circle cx="1208.9" cy="1592.8" r="2.9" fill="#000"/>
<circle cx="1217.8" cy="1466.8" r="2.9" fill="#000"/>
<circle cx="1226.6" cy="1592.8" r="2.9" fill="#000"/>
<circle cx="1235.5" cy="1466.8" r="2.9" fill="#000"/>
<circle cx="1244.3" cy="1592.8" r="2.9" fill="#000"/>
<circle cx="1253.2" cy="1466.8" r="2.9" fill="#000"/>
<circle cx="1262.0" cy="1484.8" r="2.9" fill="#000"/>
<circle cx="1270.8" cy="1466.8" r="2.9" fill="#000"/>
<circle cx="1279.7" cy="1565.8" r="2.9" fill="#000"/>
<circle cx="1288.5" cy="1466.8" r="2.9" fill="#000"/>
<circle cx="1297.4" cy="1592.8" r="2.9" fill="#000"/>
<circle cx="1306.2" cy="1457.8" r="2.9" fill="#000"/>
<circle cx="1315.1" cy="1592.8" r="2.9" fill="#000"/>
<circle cx="1324.0" cy="1466.8" r="2.9" fill="#000"/>
<circle cx="1332.8" cy="1592.8" r="2.9" fill="#000"/>
<circle cx="1341.7" cy="1466.8" r="2.9" fill="#000"/>
<circle cx="1350.5" cy="1592.8" r="2.9" fill="#000"/>
<circle cx="1359.3" cy="1457.8" r="2.9" fill="#000"/>
<circle cx="1368.2" cy="1484.8" r="2.9" fill="#000"/>
<circle cx="1377.0" cy="1466.8" r="2.9" fill="#000"/>
<circle cx="1385.9" cy="1592.8" r="2.9" fill="#000"/>
<circle cx="1394.8" cy="1439.8" r="2.9" fill="#000"/>
<circle cx="1403.6" cy="1592.8" r="2.9" fill="#000"/>
<circle cx="1412.4" cy="1466.8" r="2.9" fill="#000"/>
<circle cx="1421.3" cy="1592.8" r="2.9" fill="#000"/>
<circle cx="1430.2" cy="1466.8" r="2.9" fill="#000"/>
<circle cx="1439.0" cy="1592.8" r="2.9" fill="#000"/>
<circle cx="1447.8" cy="1466.8" r="2.9" fill="#000"/>
<circle cx="1456.7" cy="1583.8" r="2.9" fill="#000"/>
<circle cx="1465.5" cy="1466.8" r="2.9" fill="#000"/>
<circle cx="1474.4" cy="1484.8" r="2.9" fill="#000"/>
<circle cx="1483.2" cy="1466.8" r="2.9" fill="#000"/>
<circle cx="1492.1" cy="1592.8" r="2.9" fill="#000"/>
<circle cx="1500.9" cy="1448.8" r="2.9" fill="#000"/>
<circle cx="1509.8" cy="1592.8" r="2.9" fill="#000"/>
<circle cx="1518.7" cy="1466.8" r="2.9" fill="#000"/>
<circle cx="1527.5" cy="1583.8" r="2.9" fill="#000"/>
<circle cx="1536.3" cy="1466.8" r="2.9" fill="#000"/>
<circle cx="1545.2" cy="1592.8" r="2.9" fill="#000"/>
<circle cx="1554.0" cy="1466.8" r="2.9" fill="#000"/>
<circle cx="1562.9" cy="1592.8" r="2.9" fill="#000"/>
<circle cx="1571.8" cy="1466.8" r="2.9" fill="#000"/>
<circle cx="1580.6" cy="1475.8" r="2.9" fill="#000"/>
<circle cx="1589.4" cy="1466.8" r="2.9" fill="#000"/>
<circle cx="1598.3" cy="1592.8" r="2.9" fill="#000"/>
<circle cx="1607.2" cy="1466.8" r="2.9" fill="#000"/>
<circle cx="1616.0" cy="1565.8" r="2.9" fill="#000"/>
<circle cx="1624.8" cy="1466.8" r="2.9" fill="#000"/>
<circle cx="1633.7" cy="1583.8" r="2.9" fill="#000"/>
<circle cx="1642.5" cy="1466.8" r="2.9" fill="#000"/>
<circle cx="1651.4" cy="1583.8" r="2.9" fill="#000"/>
<circle cx="1660.2" cy="1466.8" r="2.9" fill="#000"/>
<circle cx="1669.1" cy="1583.8" r="2.9" fill="#000"/>
<circle cx="1677.9" cy="1466.8" r="2.9" fill="#000"/>
<circle cx="1686.8" cy="1592.8" r="2.9" fill="#000"/>
<circle cx="1695.7" cy="1358.8" r="2.9" fill="#000"/>
<circle cx="1704.5" cy="1592.8" r="2.9" fill="#000"/>
<circle cx="1713.3" cy="1466.8" r="2.9" fill="#000"/>
<circle cx="1722.2" cy="1574.8" r="2.9" fill="#000"/>
<circle cx="1731.0" cy="1466.8" r="2.9" fill="#000"/>
<circle cx="1739.9" cy="1592.8" r="2.9" fill="#000"/>
<circle cx="1748.8" cy="1466.8" r="2.9" fill="#000"/>
<circle cx="1757.6" cy="1592.8" r="2.9" fill="#000"/>
<circle cx="1766.4" cy="1466.8" r="2.9" fill="#000"/>
<circle cx="1775.3" cy="1583.8" r="2.9" fill="#000"/>
<circle cx="1784.2" cy="1466.8" r="2.9" fill="#000"/>
<circle cx="1793.0" cy="1592.8" r="2.9" fill="#000"/>
<circle cx="1801.8" cy="1358.8" r="2.9" fill="#000"/>
<circle cx="1810.7" cy="1592.8" r="2.9" fill="#000"/>
<circle cx="1819.5" cy="1457.8" r="2.9" fill="#000"/>
<circle cx="1828.4" cy="1592.8" r="2.9" fill="#000"/>
<circle cx="1837.2" cy="1448.8" r="2.9" fill="#000"/>
<circle cx="1846.1" cy="1592.8" r="2.9" fill="#000"/>
<circle cx="1855.0" cy="1466.8" r="2.9" fill="#000"/>
<circle cx="1863.8" cy="1592.8" r="2.9" fill="#000"/>
<circle cx="1872.6" cy="1466.8" r="2.9" fill="#000"/>
<circle cx="1881.5" cy="1592.8" r="2.9" fill="#000"/>
<circle cx="1890.3" cy="1466.8" r="2.9" fill="#000"/>
<circle cx="1899.2" cy="1592.8" r="2.9" fill="#000"/>
<circle cx="1908.0" cy="1358.8" r="2.9" fill="#000"/>
<circle cx="1916.9" cy="1592.8" r="2.9" fill="#000"/>
<circle cx="1925.8" cy="1466.8" r="2.9" fill="#000"/>
<circle cx="1934.6" cy="1583.8" r="2.9" fill="#000"/>
<circle cx="1943.5" cy="1457.8" r="2.9" fill="#000"/>
<circle cx="1952.3" cy="1583.8" r="2.9" fill="#000"/>
<circle cx="1961.1" cy="1466.8" r="2.9" fill="#000"/>
<circle cx="1970.0" cy="1592.8" r="2.9" fill="#000"/>
<circle cx="1978.8" cy="1466.8" r="2.9" fill="#000"/>
<circle cx="1987.7" cy="1583.8" r="2.9" fill="#000"/>
<circle cx="1996.5" cy="1466.8" r="2.9" fill="#000"/>
<circle cx="2005.4" cy="1592.8" r="2.9" fill="#000"/>
<circle cx="2014.2" cy="1358.8" r="2.9" fill="#000"/>
<circle cx="2023.1" cy="1592.8" r="2.9" fill="#000"/>
<circle cx="2032.0" cy="1457.8" r="2.9" fill="#000"/>
<circle cx="2040.8" cy="1592.8" r="2.9" fill="#000"/>
<circle cx="2049.6" cy="1448.8" r="2.9" fill="#000"/>
<circle cx="2058.5" cy="1583.8" r="2.9" fill="#000"/>
<circle cx="2067.3" cy="1466.8" r="2.9" fill="#000"/>
<circle cx="2076.2" cy="1583.8" r="2.9" fill="#000"/>
<circle cx="2085.1" cy="1466.8" r="2.9" fill="#000"/>
<circle cx="2093.9" cy="1592.8" r="2.9" fill="#000"/>
<circle cx="2102.8" cy="1466.8" r="2.9" fill="#000"/>
<circle cx="2111.6" cy="1583.8" r="2.9" fill="#000"/>
<circle cx="2120.4" cy="1466.8" r="2.9" fill="#000"/>
<circle cx="2129.3" cy="1475.8" r="2.9" fill="#000"/>
<circle cx="2138.1" cy="1466.8" r="2.9" fill="#000"/>
<circle cx="2147.0" cy="1592.8" r="2.9" fill="#000"/>
<circle cx="2155.8" cy="1466.8" r="2.9" fill="#000"/>
<circle cx="2164.7" cy="1574.8" r="2.9" fill="#000"/>
<circle cx="2173.6" cy="1466.8" r="2.9" fill="#000"/>
<circle cx="2182.4" cy="1592.8" r="2.9" fill="#000"/>
<circle cx="2191.2" cy="1466.8" r="2.9" fill="#000"/>
<circle cx="2200.1" cy="1592.8" r="2.9" fill="#000"/>
<circle cx="2208.9" cy="1457.8" r="2.9" fill="#000"/>
<circle cx="2217.8" cy="1592.8" r="2.9" fill="#000"/>
<circle cx="2226.6" cy="1466.8" r="2.9" fill="#000"/>
<circle cx="2235.5" cy="1592.8" r="2.9" fill="#000"/>
</svg>
</body></html>
